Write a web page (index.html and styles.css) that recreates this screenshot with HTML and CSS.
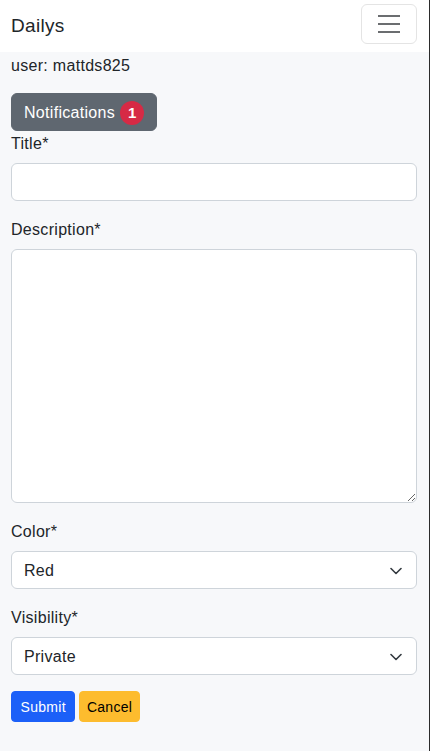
FILE: index.html
```html
<!DOCTYPE html>
<html lang="en">
<head>
<meta charset="utf-8">
<title>Dailys</title>
<link rel="stylesheet" href="styles.css">
</head>
<body>
<div class="page">
  <nav class="navbar">
    <span class="brand">Dailys</span>
    <button class="toggler" type="button" aria-label="Toggle navigation">
      <svg width="30" height="30" viewBox="0 0 30 30"><path d="M4 7h22M4 15h22M4 23h22" stroke="#6b6d70" stroke-width="2" stroke-linecap="butt"/></svg>
    </button>
  </nav>
  <main class="content">
    <p class="user">user: mattds825</p>
    <button class="btn btn-secondary notif" type="button">Notifications <span class="badge">1</span></button>
    <form class="form">
      <label class="label" for="title">Title*</label>
      <input class="control" id="title" type="text">
      <label class="label" for="desc">Description*</label>
      <textarea class="control area" id="desc"></textarea>
      <label class="label" for="color">Color*</label>
      <div class="select-wrap">
        <select class="control select" id="color"><option>Red</option></select>
        <svg class="chev" width="12" height="8" viewBox="0 0 12 8"><path d="M1 1.5l5 5 5-5" fill="none" stroke="#343a40" stroke-width="1.6" stroke-linecap="round" stroke-linejoin="round"/></svg>
      </div>
      <label class="label" for="vis">Visibility*</label>
      <div class="select-wrap">
        <select class="control select" id="vis"><option>Private</option></select>
        <svg class="chev" width="12" height="8" viewBox="0 0 12 8"><path d="M1 1.5l5 5 5-5" fill="none" stroke="#343a40" stroke-width="1.6" stroke-linecap="round" stroke-linejoin="round"/></svg>
      </div>
      <div class="actions">
        <button class="btn-sm primary" type="button">Submit</button>
        <button class="btn-sm warning" type="button">Cancel</button>
      </div>
    </form>
  </main>
</div>
</body>
</html>
```
FILE: styles.css
```css
* { box-sizing: border-box; }
html, body { margin: 0; padding: 0; }
body {
  font-family: "Liberation Sans", Arial, sans-serif;
  font-size: 16px;
  line-height: 24px;
  letter-spacing: 0.3px;
  color: #212529;
  background: #f8f9fa;
}
.page {
  width: 430px;
  min-height: 751px;
  background: #f7f8fa;
  border-right: 1px solid #2b2b2b;
}
.navbar {
  height: 52px;
  background: #fff;
  display: flex;
  align-items: center;
  justify-content: space-between;
  padding: 0 12px 2px 11px;
}
.brand {
  font-size: 19px;
  line-height: 24px;
  color: #212529;
  padding-top: 1px;
}
.toggler {
  width: 56px;
  height: 40px;
  margin-top: -2px;
  background: #fff;
  border: 1px solid #e4e4e4;
  border-radius: 6px;
  padding: 0;
  display: flex;
  align-items: center;
  justify-content: center;
}
.toggler svg { display: block; }
.content {
  padding: 0 12px 0 11px;
}
.user {
  margin: 2px 0 15px;
  line-height: 24px;
}
.btn {
  font-family: inherit;
  font-size: 16px;
  line-height: 24px;
  letter-spacing: 0.3px;
  border-radius: 6px;
  border: 1px solid transparent;
  padding: 6px 12px;
  display: inline-flex;
  align-items: center;
}
.btn-secondary {
  background: #5f6770;
  color: #fff;
  border-color: #5f6770;
}
.notif { height: 38px; padding-top: 7px; padding-bottom: 5px; }
.badge {
  display: inline-flex;
  align-items: center;
  justify-content: center;
  width: 24px;
  height: 24px;
  margin-left: 5px;
  margin-top: -1px;
  border-radius: 50%;
  background: #d62a45;
  color: #fff;
  font-size: 15px;
  font-weight: bold;
  letter-spacing: 0;
  line-height: 1;
}
.form {
  display: flex;
  flex-direction: column;
}
.label {
  display: block;
  line-height: 24px;
  padding-top: 1px;
  margin-bottom: 7px;
}
.control {
  display: block;
  width: 100%;
  height: 38px;
  font-family: inherit;
  font-size: 16px;
  line-height: 24px;
  letter-spacing: 0.3px;
  color: #212529;
  background: #fff;
  border: 1px solid #ced4da;
  border-radius: 6px;
  padding: 7px 12px 5px;
  margin: 0 0 16px;
}
.area {
  height: 254px;
  resize: vertical;
}
.select-wrap {
  position: relative;
}
.select {
  appearance: none;
  -webkit-appearance: none;
  padding-right: 36px;
}
.chev {
  position: absolute;
  right: 15px;
  top: 16px;
  width: 12px;
  height: 8px;
  pointer-events: none;
}
.actions {
  display: flex;
  gap: 4px;
}
.btn-sm {
  font-family: inherit;
  font-size: 14px;
  line-height: 21px;
  letter-spacing: 0.3px;
  padding: 5px 8.5px 3px;
  border-radius: 4px;
  border: 1px solid transparent;
  height: 31px;
}
.primary { background: #1c60f8; border-color: #1c60f8; color: #fff; }
.warning { background: #fdbc2e; border-color: #fdbc2e; color: #000; padding-left: 6.5px; padding-right: 6.5px; }
```
